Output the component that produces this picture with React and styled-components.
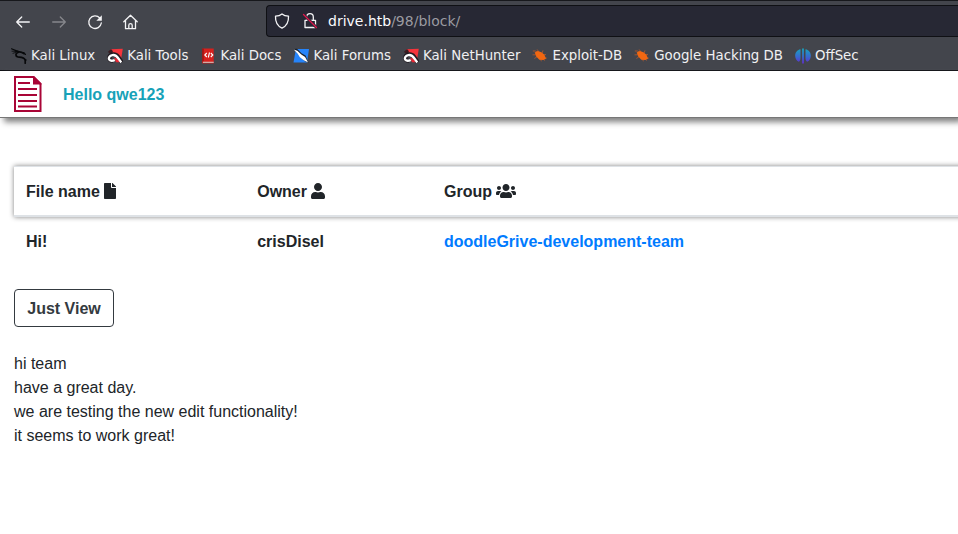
import React from "react";
import styled, { createGlobalStyle } from "styled-components";
import { FaFile, FaUser, FaUsers } from "react-icons/fa";

const GlobalStyle = createGlobalStyle`
  * { box-sizing: border-box; }
  body {
    margin: 0;
    overflow: hidden;
    background: #fff;
    color: #212529;
    font: 16px/24px "Liberation Sans", Arial, sans-serif;
  }
`;

const Chrome = styled.header`
  height: 71px;
  background: #43454c;
  border-top: 1px solid #17181c;
  border-bottom: 1px solid #0f1014;
  font-family: "DejaVu Sans", sans-serif;
  color: #f0f0f2;
  white-space: nowrap;
`;

const Toolbar = styled.div`
  display: flex;
  align-items: center;
  height: 40px;
  padding-left: 15px;
`;

const NavButtons = styled.nav`
  display: flex;
  gap: 20px;
  width: 251px;
  padding-top: 1px;
`;

const NavIcon = styled.svg`
  width: 16px;
  height: 16px;
  flex: none;
  fill: none;
  stroke: ${(p) => (p.$muted ? "#86878c" : "#f4f4f6")};
  stroke-width: 1.3;
  stroke-linecap: round;
  stroke-linejoin: round;
`;

const AddressBar = styled.div`
  display: flex;
  align-items: center;
  flex: 1;
  height: 32px;
  padding-left: 7px;
  gap: 12px;
  background: #272834;
  border: 1px solid #0f1014;
  border-right: 0;
  border-radius: 4px 0 0 4px;
`;

const Url = styled.span`
  font-size: 14px;
  line-height: 20px;
  margin-left: -2px;
  color: #fbfbfe;
`;

const UrlPath = styled.span`
  color: #9b9ba1;
`;

const Bookmarks = styled.div`
  display: flex;
  align-items: center;
  gap: 12px;
  height: 29px;
  padding: 1px 0 0 11px;
  font-size: 13.333px;
  line-height: 20px;
`;

const Bookmark = styled.div`
  display: flex;
  align-items: center;
  gap: 4px;
`;

const Favicon = styled.svg`
  width: 16px;
  height: 16px;
  flex: none;
`;

const SiteHeader = styled.header`
  display: flex;
  align-items: center;
  height: 47px;
  padding: 0 0 0 14px;
  gap: 21px;
  border-bottom: 1px solid #777;
  box-shadow: 4px 4px 6px #808080;
  color: #17a2b8;
  font-weight: 700;
`;

const Greeting = styled.span`
  padding-top: 2px;
`;

const Logo = styled.svg`
  width: 28px;
  height: 36px;
`;

const Main = styled.main`
  padding: 48px 0 0 14px;
  overflow-x: clip;
`;

const FileTable = styled.div`
  margin-right: -8px;
  font-weight: 700;
`;

const TableRow = styled.div`
  display: grid;
  grid-template-columns: 231.2px 186.8px 1fr;
  padding: 13px 12px 11px;
  height: 50px;
`;

const TableHead = styled(TableRow)`
  height: 51px;
  border-top: 1px solid #dee2e6;
  border-bottom: 2px solid #dee2e6;
  box-shadow: 0 0 5px #808080;
`;

const HeadCell = styled.div`
  display: flex;
  gap: 4.4px;
  svg {
    display: block;
    flex: none;
    width: ${(p) => p.$iconWidth}px;
    height: 16px;
    margin-top: 3px;
  }
`;

const GroupLink = styled.a`
  color: #007bff;
`;

const ViewButton = styled.button`
  display: block;
  width: 100px;
  height: 38px;
  margin: 22px 0 25px;
  padding: 2px 0 0;
  background: transparent;
  border: 1px solid #343a40;
  border-radius: 4px;
  color: #343a40;
  font: inherit;
  font-weight: 700;
`;

const Message = styled.div`
  white-space: pre-line;
`;

const Dragon = () => (
  <Favicon viewBox="0 0 16 16" fill="none" stroke="#08090b" strokeLinecap="round">
    <path d="M.5.8 5 2.6 9.2 4" strokeWidth="1.2" />
    <path d="M1 3.2 4.5 3.3M2 5.3l3-1" strokeWidth=".8" />
    <path d="M4.5 3C8 3.5 9 4 10.5 4.3l2.7 1.5M7.5 4.2C4 5.2 4.3 8.5 7 9c3 .3 6.2.2 7 2.7.4 1.3.2 2.2.2 3.5" strokeWidth="1.7" />
    <path d="m10 4.2 3.4.5 1.2 2M13.8 11.4l1.6.6" strokeWidth="1" />
  </Favicon>
);

const Magnet = () => (
  <Favicon viewBox="0 0 16 16">
    <path d="M3 1.2 15.8.8 13.8 13 8 9Z" fill="#f5343b" />
    <path d="M.8 4 4 1l2 2.2L4 6Z" fill="#3a1d22" />
    <path d="M5.8 12.7C1.5 13.3.8 7.7 5.7 6.4c4.5-1.1 5.8 3.4 9 8" fill="none" stroke="#211a20" strokeWidth="4.2" />
    <path d="m7 9.7 4 1.1 1.5 3.4H9Z" fill="#e52835" />
    <path d="M7.7 12C1.5 15-.5 8.5 5.4 7.1c4.7-1 5.5 3.7 8.9 7.2" fill="none" stroke="#fff" strokeWidth="2.4" />
  </Favicon>
);

const Book = () => (
  <Favicon viewBox="0 0 16 16">
    <path d="M2.2.5h11.5v14.9H2.2Z" fill="#d7201d" />
    <path d="M2.2.5h1.5v13H2.2Z" fill="#991714" />
    <path d="M3 13.7h10.7v1.3H3Z" fill="#d1aaa5" />
    <path d="m6.8 5-2 2 2 2m4-4 2 2-2 2M9.5 4.5l-1.2 5" fill="none" stroke="#fff" strokeWidth="1.1" />
  </Favicon>
);

const Knife = () => (
  <Favicon viewBox="0 0 16 16">
    <path d="M3 1h13l-2 13.5H.5L2 6Z" fill="#2684fa" />
    <path d="M.8 1 4 .7l4.5 4.5 4 2.4 3 7.1-3.8-1.4-3.7-4.1Z" fill="#19202b" />
    <path d="m.7 1.6 3.6 1.2 4 3.6 3.8 2.5 3 5.7-4-2-4.2-3.4-2.2-3.4Z" fill="#fff" />
  </Favicon>
);

const Bug = () => (
  <Favicon viewBox="0 0 16 16">
    <path d="M.8 3h3l3 3M.5 6.8h4M2.4 10.5l3-2M5.2 1.5 7 4M11 2.4 10 5.5M11 7l3-.5M14.8 10.2l-4-1M9.3 13.3l-.8-3M12.8 12.5 10 10" stroke="#b8592b" strokeWidth=".8" fill="none" />
    <path d="m2.7 4.6 3-1.6 3.7 1.3 3 2.4 1.6 4.1-2.7 1.2-4-.3-3-3.2Z" fill="#f26711" />
  </Favicon>
);

const OffSec = () => (
  <Favicon viewBox="0 0 16 16">
    <defs>
      <linearGradient id="offsec" x1="0" y1="0" x2="0" y2="16" gradientUnits="userSpaceOnUse">
        <stop stopColor="#15a8bc" />
        <stop offset=".55" stopColor="#3769cf" />
        <stop offset="1" stopColor="#6428cb" />
      </linearGradient>
    </defs>
    <path d="M5.5 1.2C-1 2.5-1.5 11 3.7 13.8c1.3-.5 1.8-2 1.8-4ZM7.1.5h1.8v15H7.1ZM10.5 1.2c6.5 1.3 7 9.8 1.8 12.6-1.3-.5-1.8-2-1.8-4Z" fill="url(#offsec)" />
  </Favicon>
);

const bookmarks = [
  ["Kali Linux", Dragon],
  ["Kali Tools", Magnet],
  ["Kali Docs", Book],
  ["Kali Forums", Knife],
  ["Kali NetHunter", Magnet],
  ["Exploit-DB", Bug],
  ["Google Hacking DB", Bug],
  ["OffSec", OffSec],
];

export default function App() {
  return (
    <>
      <GlobalStyle />
      <Chrome>
        <Toolbar>
          <NavButtons>
            <NavIcon viewBox="0 0 16 16"><path d="M14.3 8H1.7m5-5-5 5 5 5" /></NavIcon>
            <NavIcon viewBox="0 0 16 16" $muted><path d="M1.7 8h12.6m-5-5 5 5-5 5" /></NavIcon>
            <NavIcon viewBox="0 0 16 16">
              <path d="M12.8 4A6.3 6.3 0 1 0 14.3 9" />
              <path d="M14.8 1.2v5.6H9.3Z" fill="#f4f4f6" stroke="none" />
            </NavIcon>
            <NavIcon viewBox="0 0 16 16">
              <path d="m.8 7.7 6.7-6.4 6.7 6.4M2.5 6.5v8.2h10V6.5M5.8 14.5v-3.2a1.7 1.7 0 0 1 3.4 0v3.2" />
            </NavIcon>
          </NavButtons>
          <AddressBar>
            <NavIcon viewBox="0 0 16 16">
              <path d="M8 .9C6 2.6 4 3 1.5 3.1 1.2 9 3 12.8 8 15.1c5-2.3 6.8-6.1 6.5-12C12 3 10 2.6 8 .9Z" />
            </NavIcon>
            <NavIcon viewBox="0 0 16 16">
              <path d="M4.7 7V4a3.3 3.3 0 0 1 6.6 0v3M3 7.3h10.5v7.2H3Z" />
              <path d="m1.5 1.5 13 13" stroke="#272834" strokeWidth="3" />
              <path d="m1.5 1.5 13 13" stroke="#e2164c" />
            </NavIcon>
            <Url>drive.htb<UrlPath>/98/block/</UrlPath></Url>
          </AddressBar>
        </Toolbar>
        <Bookmarks>
          {bookmarks.map(([label, Icon]) => (
            <Bookmark key={label}><Icon />{label}</Bookmark>
          ))}
        </Bookmarks>
      </Chrome>
      <SiteHeader>
        <Logo viewBox="0 0 28 36">
          <path d="M1 1h18.5l7 7v27H1Z" fill="#fff" stroke="#a90536" strokeWidth="2" />
          <path d="M19 0h1l7.5 7.5v1H19Z" fill="#a90536" />
          <path d="M4 7h12M4 13h19M4 19h19M4 25h19M4 30.5h19" stroke="#a90536" strokeWidth="1.8" />
        </Logo>
        <Greeting>Hello qwe123</Greeting>
      </SiteHeader>
      <Main>
        <FileTable>
          <TableHead>
            <HeadCell $iconWidth={12}>File name <FaFile /></HeadCell>
            <HeadCell $iconWidth={14}>Owner <FaUser /></HeadCell>
            <HeadCell $iconWidth={20}>Group <FaUsers /></HeadCell>
          </TableHead>
          <TableRow>
            <span>Hi!</span>
            <span>crisDisel</span>
            <GroupLink>doodleGrive-development-team</GroupLink>
          </TableRow>
        </FileTable>
        <ViewButton>Just View</ViewButton>
        <Message>{"hi team\nhave a great day.\nwe are testing the new edit functionality!\nit seems to work great!"}</Message>
      </Main>
    </>
  );
}
